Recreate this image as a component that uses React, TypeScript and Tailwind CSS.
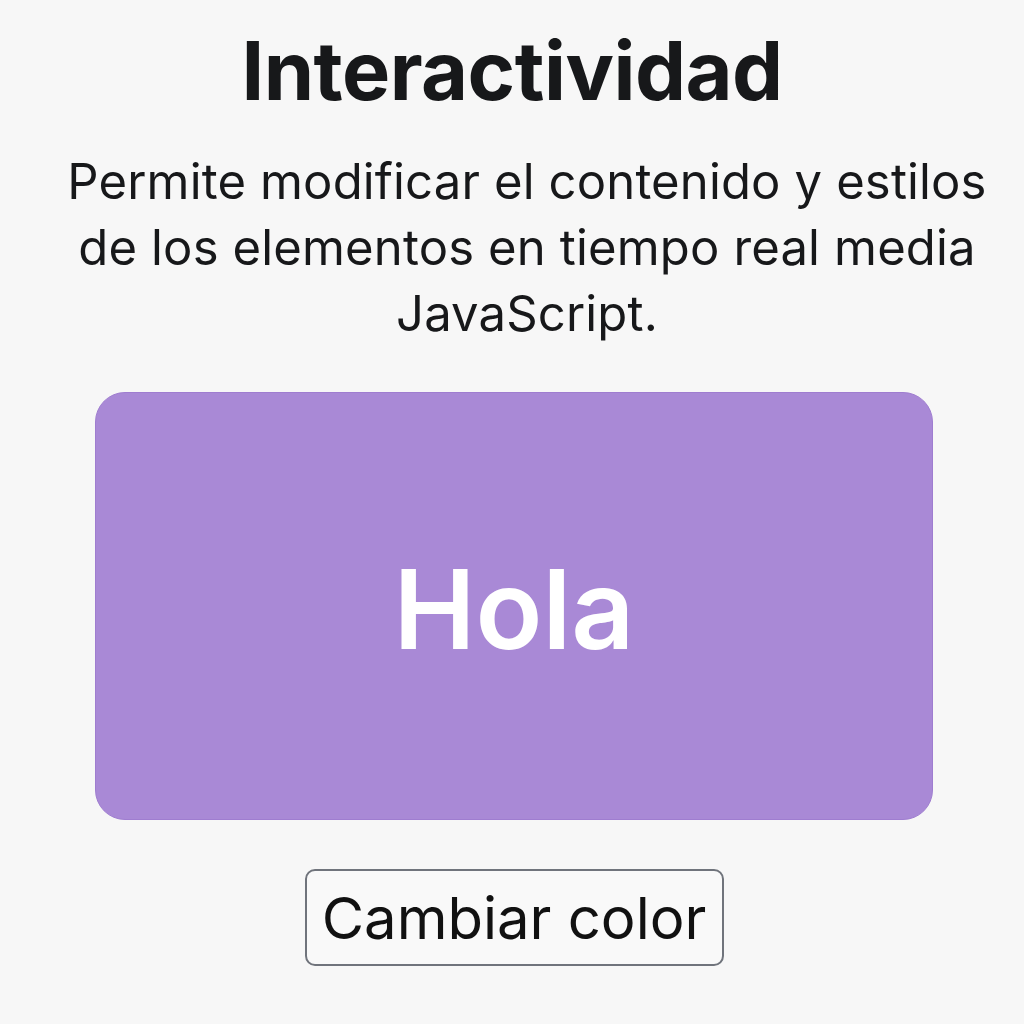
export default function App() {
  return (
    <div className="min-h-[1024px] w-[1024px] bg-[#f7f7f7] flex flex-col items-center font-['Inter','Liberation_Sans',sans-serif] text-[#17181a]">
      <h1 className="mt-[21px] text-[81px] leading-[100px] font-bold tracking-[-0.5px]">
        Interactividad
      </h1>
      <p className="mt-[28px] w-[930px] ml-[30px] text-center text-[49px] leading-[66px] tracking-[0.15px] font-normal">
        Permite modificar el contenido y estilos de los elementos en tiempo real media JavaScript.
      </p>
      <div className="mt-[45px] ml-[4px] w-[838px] h-[428px] rounded-[30px] bg-[#a989d6] border border-[#9f7dd0] flex items-center justify-center">
        <span className="text-white text-[110px] font-semibold leading-none mt-[6px]">Hola</span>
      </div>
      <button className="mt-[49px] ml-[4px] w-[419px] h-[97px] rounded-[10px] border-2 border-[#70747c] bg-[#f9f9f9] text-[58px] leading-none text-[#111]">
        Cambiar color
      </button>
    </div>
  );
}
